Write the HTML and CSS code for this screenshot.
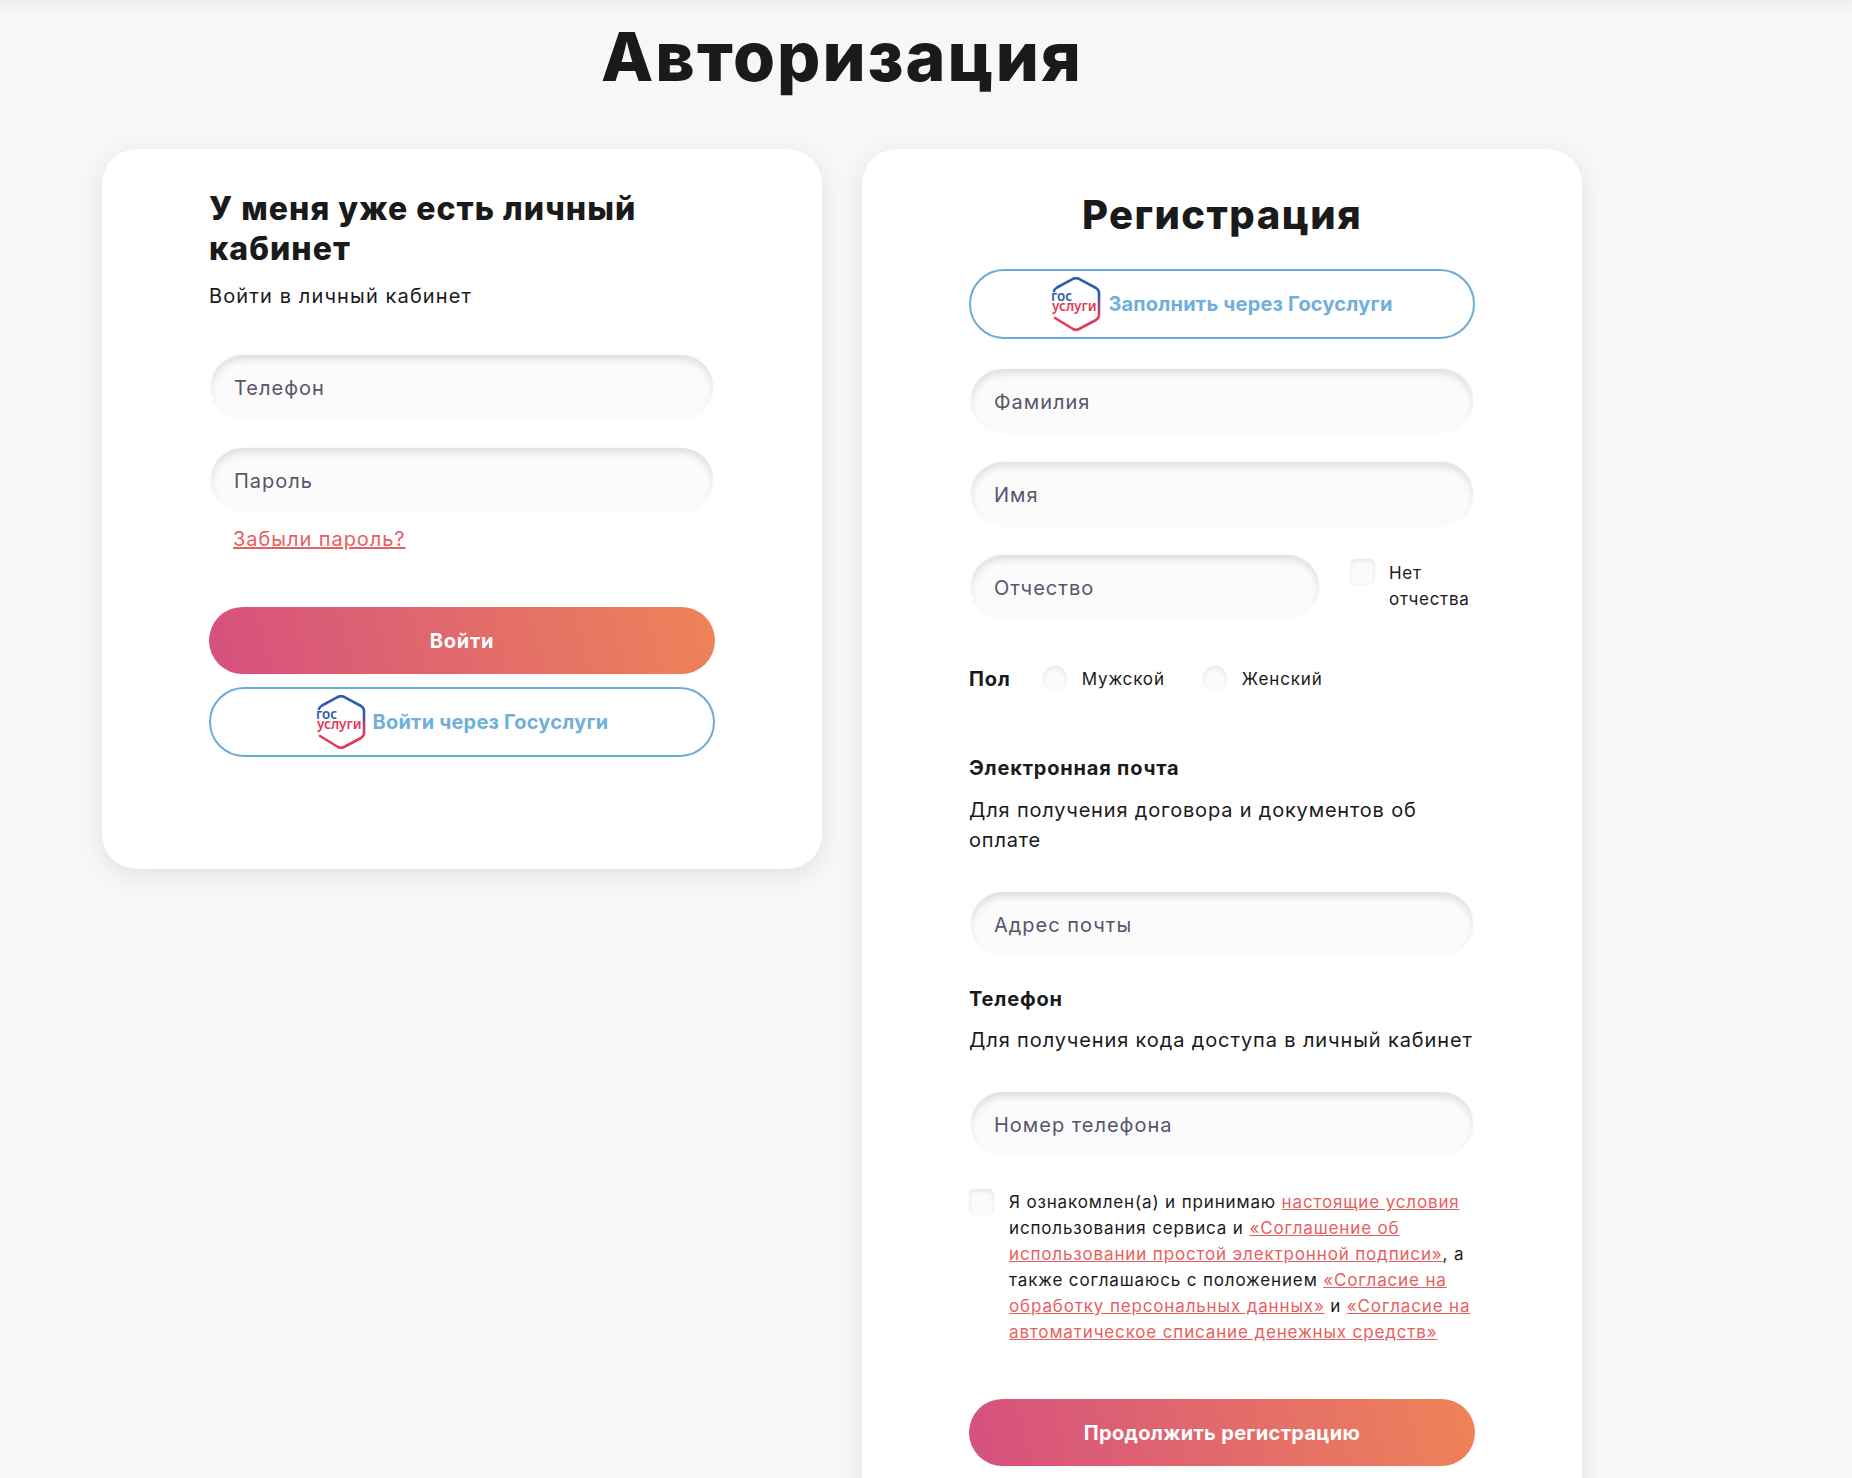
FILE: index.html
```html
<!DOCTYPE html>
<html lang="ru">
<head>
<meta charset="utf-8">
<title>Авторизация</title>
<link rel="stylesheet" href="styles.css">
</head>
<body>
<div class="top-shadow"></div>
<main class="page">
  <h1 class="title">Авторизация</h1>
  <div class="cards">
    <section class="card card-login">
      <h2 class="login-heading">У меня уже есть личный кабинет</h2>
      <p class="text login-sub">Войти в личный кабинет</p>
      <div class="field field-first">Телефон</div>
      <div class="field">Пароль</div>
      <a class="forgot" href="#">Забыли пароль?</a>
      <button class="btn-primary btn-login" type="button">Войти</button>
      <button class="btn-gos btn-gos-login" type="button">
        <svg class="gos-logo" viewBox="0 0 50 54" aria-hidden="true">
          <defs><linearGradient id="gosA" x1="0" y1="0" x2="0" y2="1"><stop offset="0.35" stop-color="#2c5cb0"/><stop offset="0.68" stop-color="#e2395a"/></linearGradient></defs>
          <path class="gos-hex" stroke="url(#gosA)" d="M3 14 Q3.500 12 6 10.500 L22 1.800 Q25 .5 28 1.800 L45 11 Q48 13 48 16 L48 38 Q48 41 45 43 L28 52 Q25 53.500 22 52 L4 41"/>
          <text class="gos-word gos-blue" x="0" y="24">гос</text>
          <text class="gos-word gos-red" x="1" y="34">услуги</text>
        </svg>
        <span>Войти через Госуслуги</span>
      </button>
    </section>
    <section class="card card-reg">
      <h2 class="reg-heading">Регистрация</h2>
      <button class="btn-gos btn-gos-reg" type="button">
        <svg class="gos-logo" viewBox="0 0 50 54" aria-hidden="true">
          <defs><linearGradient id="gosB" x1="0" y1="0" x2="0" y2="1"><stop offset="0.35" stop-color="#2c5cb0"/><stop offset="0.68" stop-color="#e2395a"/></linearGradient></defs>
          <path class="gos-hex" stroke="url(#gosB)" d="M3 14 Q3.500 12 6 10.500 L22 1.800 Q25 .5 28 1.800 L45 11 Q48 13 48 16 L48 38 Q48 41 45 43 L28 52 Q25 53.500 22 52 L4 41"/>
          <text class="gos-word gos-blue" x="0" y="24">гос</text>
          <text class="gos-word gos-red" x="1" y="34">услуги</text>
        </svg>
        <span>Заполнить через Госуслуги</span>
      </button>
      <div class="field field-reg">Фамилия</div>
      <div class="field field-reg">Имя</div>
      <div class="patronymic-row">
        <div class="field field-reg field-short">Отчество</div>
        <label class="no-patronymic"><span class="check check-top"></span><span class="small">Нет отчества</span></label>
      </div>
      <div class="gender-row">
        <span class="gender-title">Пол</span>
        <label class="radio-label"><span class="radio"></span><span class="small">Мужской</span></label>
        <label class="radio-label"><span class="radio"></span><span class="small">Женский</span></label>
      </div>
      <h3 class="block-title block-email">Электронная почта</h3>
      <p class="text block-sub">Для получения договора и документов об оплате</p>
      <div class="field field-after-sub">Адрес почты</div>
      <h3 class="block-title block-phone">Телефон</h3>
      <p class="text block-sub block-sub-phone">Для получения кода доступа в личный кабинет</p>
      <div class="field field-after-sub">Номер телефона</div>
      <div class="terms">
        <span class="check"></span>
        <p class="small terms-text">Я ознакомлен(а) и принимаю <a href="#">настоящие условия</a> использования сервиса и <a href="#">«Соглашение об использовании простой электронной подписи»</a>, а также соглашаюсь с положением <a href="#">«Согласие на обработку персональных данных»</a> и <a href="#">«Согласие на автоматическое списание денежных средств»</a></p>
      </div>
      <button class="btn-primary btn-continue" type="button">Продолжить регистрацию</button>
    </section>
  </div>
</main>
</body>
</html>
```
FILE: styles.css
```css
* { box-sizing: border-box; }
html, body { margin: 0; height: 1478px; overflow: hidden; }
body {
  background: #f7f7f7;
  color: #1a1a1a;
  font-family: Inter, "Noto Sans", sans-serif;
}
.top-shadow { height: 0; box-shadow: 0 0 14px 2px rgba(0, 0, 0, .16); }
.page { width: 1480px; margin-left: 102px; }
.title {
  margin: 14px 0 51px;
  font-size: 68px;
  line-height: 84px;
  font-weight: 800;
  letter-spacing: 2px;
  text-align: center;
}
.cards { display: flex; align-items: flex-start; gap: 40px; }
.card {
  width: 720px;
  padding: 40px 107px 0;
  background: #fff;
  border-radius: 35px;
  box-shadow: 0 6px 24px rgba(0, 0, 0, .09);
  display: flex;
  flex-direction: column;
}
.card-login { height: 720px; }
.card-reg { height: 1400px; }
.login-heading {
  margin: 0;
  font-size: 32px;
  line-height: 40px;
  font-weight: 800;
  letter-spacing: 1.05px;
}
.text {
  margin: 0;
  font-size: 20px;
  line-height: 30px;
  letter-spacing: .82px;
}
.login-sub { margin-top: 12px; letter-spacing: 1.12px; }
.field {
  height: 63px;
  margin: 30px 2px 0;
  padding: 3px 0 0 23px;
  display: flex;
  align-items: center;
  background: #fbfbfc;
  border-radius: 32px;
  box-shadow: inset 0 5px 7px rgba(0, 0, 0, .11), 0 0 4px rgba(0, 0, 0, .04);
  color: #55566a;
  font-size: 20px;
  letter-spacing: 1px;
}
.field-first { margin-top: 44px; }
.forgot {
  margin-top: 13px;
  padding-left: 24px;
  font-size: 20px;
  line-height: 30px;
  letter-spacing: .95px;
  color: #e7605f;
}
.btn-primary {
  height: 67px;
  border: 0;
  border-radius: 34px;
  background: linear-gradient(75deg, #d5507f 0%, #ef8358 100%);
  color: #fff;
  font-family: inherit;
  font-size: 20px;
  font-weight: 700;
  letter-spacing: .3px;
}
.btn-login { margin-top: 53px; letter-spacing: .7px; }
.btn-continue { margin-top: 54px; }
.btn-gos {
  height: 70px;
  background: #fff;
  border: 2px solid #6bacd6;
  border-radius: 35px;
  color: #6fb0da;
  font-family: inherit;
  font-size: 20px;
  font-weight: 700;
  letter-spacing: .2px;
  display: flex;
  align-items: center;
  justify-content: center;
  gap: 7px;
}
.btn-gos-login { margin-top: 13px; }
.gos-logo { width: 50px; height: 54px; flex: none; }
.gos-hex { fill: none; stroke-width: 2.6; stroke-linecap: round; stroke-linejoin: round; }
.gos-word { font-family: "Noto Sans", sans-serif; font-size: 13.5px; font-weight: 600; letter-spacing: 0; }
.gos-blue { fill: #2c5cb0; }
.gos-red { fill: #e2395a; }
.reg-heading {
  margin: 0;
  padding-top: 1px;
  font-size: 40px;
  line-height: 50px;
  font-weight: 800;
  letter-spacing: 1.45px;
  text-align: center;
}
.btn-gos-reg { margin-top: 29px; }
.patronymic-row { display: flex; align-items: flex-start; }
.field-short { width: 348px; flex: none; }
.no-patronymic {
  margin: 30px 0 0 29px;
  padding-top: 4px;
  display: flex;
  align-items: flex-start;
  gap: 14px;
}
.check {
  display: block;
  width: 25px;
  height: 26px;
  flex: none;
  background: #fbfbfc;
  border-radius: 6px;
  box-shadow: inset 0 2px 4px rgba(0, 0, 0, .09), 0 0 3px rgba(0, 0, 0, .04);
}
.small {
  font-size: 17px;
  line-height: 26px;
  letter-spacing: .85px;
}
.no-patronymic .small { width: 90px; margin-top: 1px; letter-spacing: .7px; }
.gender-row {
  margin-top: 48px;
  display: flex;
  align-items: center;
  height: 26px;
}
.gender-title { font-size: 20px; font-weight: 700; letter-spacing: .8px; }
.radio-label { display: flex; align-items: center; gap: 15px; margin-left: 32px; }
.radio-label + .radio-label { margin-left: 38px; }
.radio {
  display: block;
  width: 24px;
  height: 26px;
  border-radius: 50%;
  background: #fbfbfc;
  box-shadow: inset 0 2px 4px rgba(0, 0, 0, .09), 0 0 3px rgba(0, 0, 0, .04);
}
.block-title {
  margin: 0;
  font-size: 20px;
  line-height: 30px;
  font-weight: 700;
  letter-spacing: .8px;
}
.block-email { margin-top: 61px; }
.block-phone { margin-top: 29px; }
.block-sub { margin-top: 12px; }
.block-sub-phone { margin-top: 11px; white-space: nowrap; letter-spacing: .88px; }
.field-after-sub { margin-top: 37px; }
.terms { margin-top: 34px; display: flex; gap: 15px; }
.terms-text { margin: 0; }
.terms-text a { color: #e7605f; }
```
